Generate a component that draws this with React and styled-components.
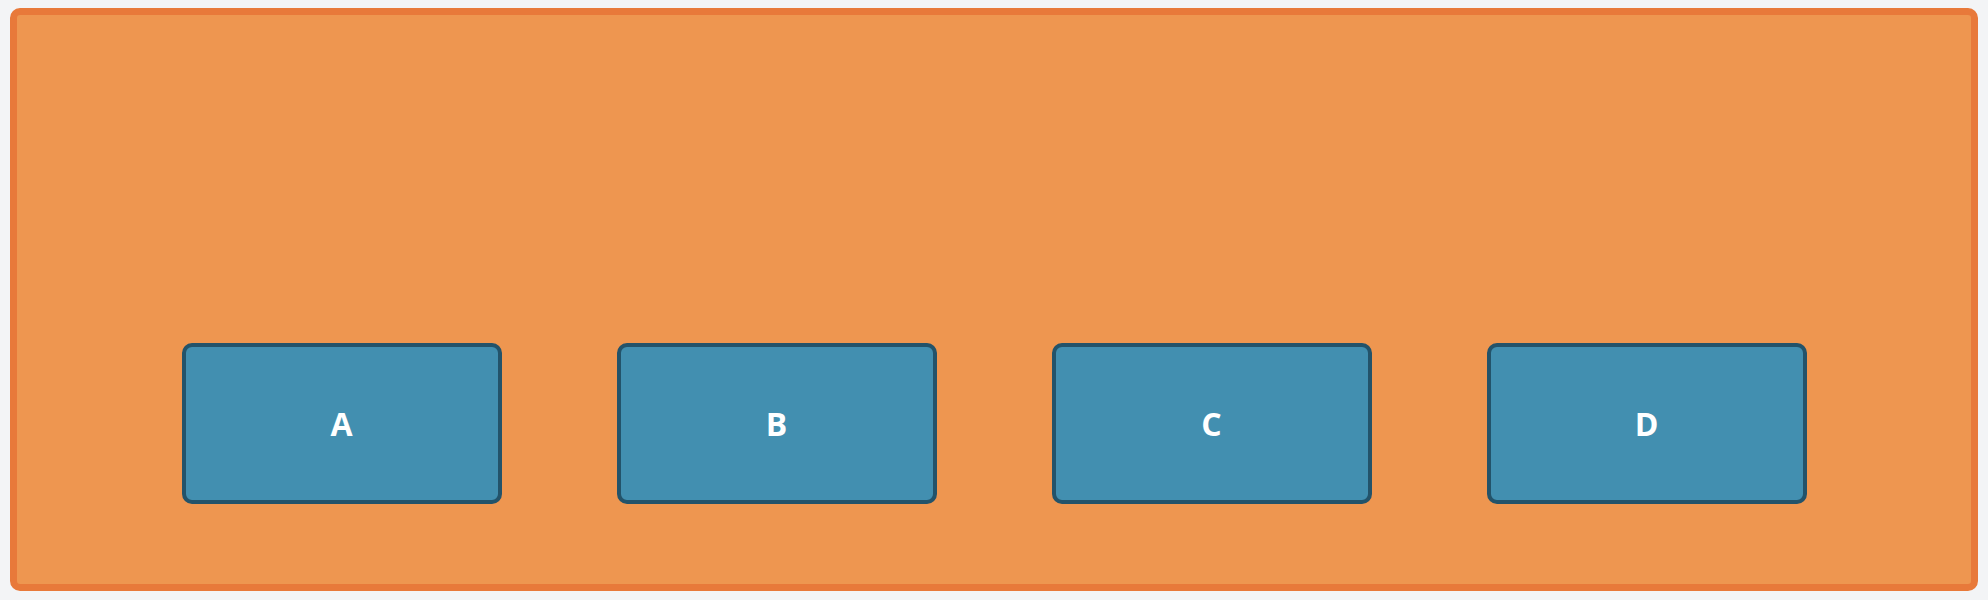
import React from "react";
import styled, { createGlobalStyle } from "styled-components";

const Global = createGlobalStyle`
  html, body { margin: 0; padding: 0; background: #f3f4f6; }
  body { font-family: "Open Sans", "Liberation Sans", sans-serif; }
`;

const Page = styled.div`
  padding: 8px 10px 9px;
`;

const Panel = styled.div`
  box-sizing: border-box;
  height: 583px;
  border: 7px solid #e8793a;
  border-radius: 10px;
  background: #ee9650;
  display: flex;
  justify-content: center;
  align-items: flex-end;
  gap: 115px;
  padding-bottom: 80px;
`;

const Tile = styled.div`
  box-sizing: border-box;
  width: 320px;
  height: 161px;
  border: 4px solid #23536a;
  border-radius: 10px;
  background: #428fb0;
  display: flex;
  align-items: center;
  justify-content: center;
  color: #ffffff;
  font-weight: 700;
  font-size: 32px;
  line-height: 1;
`;

export default function App() {
  return (
    <>
      <Global />
      <Page>
        <Panel>
          {["A", "B", "C", "D"].map((l) => (
            <Tile key={l}>{l}</Tile>
          ))}
        </Panel>
      </Page>
    </>
  );
}
